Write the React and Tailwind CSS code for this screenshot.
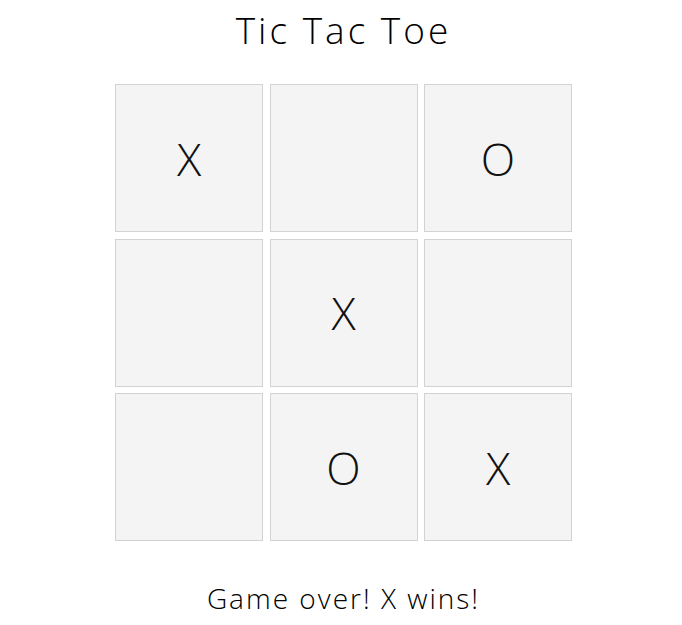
import React, { useState } from "react";

// winning board shown in the reference
const initialBoard = ["X", "", "O", "", "X", "", "", "O", "X"];

const Cell = ({ value }) => {
  return (
    <button className="w-[148px] h-[148px] bg-[#f4f4f4] border border-[#d2d2d2] flex items-center justify-center text-[45px] font-light text-[#111] leading-none cursor-pointer">
      {value}
    </button>
  );
};

const App = () => {
  const [board] = useState(initialBoard);

  return (
    <div
      className="w-[682px] h-[625px] bg-white flex flex-col items-center pl-[5px] text-black"
      style={{ fontFamily: "'Open Sans', Lato, sans-serif" }}
    >
      <h1 className="text-[37px] font-light leading-none mt-[11px] tracking-[3px]">Tic Tac Toe</h1>

      <div className="grid grid-cols-[148px_148px_148px] gap-[6.5px] mt-[36px]">
        {board.map((v, i) => (
          <Cell key={i} value={v} />
        ))}
      </div>

      <p className="text-[28px] font-light leading-none mt-[43px] tracking-[2px]">Game over! X wins!</p>
    </div>
  );
};

export default App;
